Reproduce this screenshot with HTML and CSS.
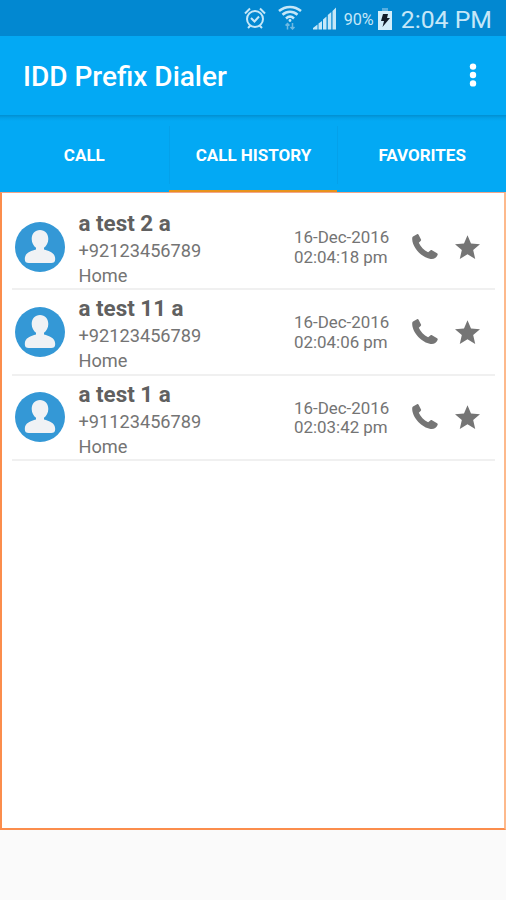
FILE: index.html
```html
<!DOCTYPE html>
<html lang="en">
<head>
    <meta charset="UTF-8">
    <meta name="viewport" content="width=device-width, initial-scale=1.0">
    <title>IDD Prefix Dialer</title>
    <link rel="stylesheet" href="styles.css">
</head>
<body>
    <!-- shared icons -->
    <svg class="sprite" width="0" height="0">
        <symbol id="avatar" viewBox="0 0 50 50">
            <circle cx="25" cy="25" r="25" fill="#3498d6"/>
            <path fill="#f0f2f5" d="M25 8c5 0 8.300 3.700 8.300 9 0 3.600-1.800 7-4.300 8.800v1.700c5 1.500 11.200 3 11.200 9.500 0 3-1.500 4-4 4H13.800c-2.500 0-4-1-4-4 0-6.500 6.200-8 11.200-9.500v-1.700c-2.500-1.800-4.300-5.200-4.300-8.800 0-5.300 3.300-9 8.300-9z"/>
        </symbol>
        <symbol id="phone" viewBox="0 0 26 26">
            <path fill="#757575" d="M1 2.600L5 .2c.6-.3 1.300-.1 1.600.5L9 5.400c.3.600.1 1.300-.4 1.700L6.800 8.800c1.700 4 5.100 7.300 9.300 9.500l2.300-1.900c.5-.4 1.100-.4 1.600-.1l5.100 3c.6.400.8 1 .5 1.600-1.300 3.200-3.900 4.400-7 4C10.200 23.800.6 14.200.2 5.300.1 4 .3 3.100 1 2.600z"/>
        </symbol>
        <symbol id="star" viewBox="2 2 20 19">
            <path fill="#757575" d="M12 17.270L18.180 21l-1.640-7.030L22 9.240l-7.190-.610L12 2 9.190 8.630 2 9.240l5.460 4.730L5.820 21z"/>
        </symbol>
    </svg>

    <div class="status-bar">
        <svg class="alarm" width="22" height="22" viewBox="0 0 22 22" fill="none" stroke="#c5e7f8" stroke-width="2">
            <circle cx="11" cy="12" r="8"/>
            <path d="M1 6.500L6 1.500M21 6.500L16 1.500M4 21l2.500-2.500M18 21l-2.500-2.500M7 11l3.500 3.500 4.500-5"/>
        </svg>
        <svg class="wifi" width="24" height="25" viewBox="0 0 24 25" fill="none" stroke="#c5e7f8" stroke-width="2.500">
            <path d="M1 6c6.500-5.500 15.500-5.500 22 0M4.500 9.800c4.500-4 10.500-4 15 0M8 13.500c2.500-2.300 5.500-2.300 8 0"/>
            <circle cx="12" cy="15.500" r="1.400" fill="#c5e7f8" stroke="none"/>
            <path stroke="#6fb9e2" stroke-width="1.500" d="M9.500 24.500v-6M7.500 20.500l2-2 2 2M14.500 18v6M12.500 22l2 2 2-2"/>
        </svg>
        <svg class="signal" width="24" height="23" viewBox="0 0 24 23" fill="#c5e7f8">
            <path d="M0 22.500v-1.500l4.500-3.500v5zM5.500 16.500l3.500-2.500v8.500H5.500zM10 12.500l3.500-3v13H10zM14.800 8L18.300 5v17.500h-3.500zM19.500 4L23 .5v22h-3.500z"/>
        </svg>
        <span class="percent">90%</span>
        <svg class="battery" width="14" height="22" viewBox="0 0 14 22">
            <path fill="#58aee0" d="M4 0h6v3H4z"/>
            <path fill="#d3eefb" d="M0 3h14v19H0z"/>
            <path fill="#111c2a" d="M5 6h5L9 10h3l-7.500 9 1.500-6H3z"/>
        </svg>
        <span class="clock">2:04 PM</span>
    </div>

    <header>
        <h1>IDD Prefix Dialer</h1>
        <svg class="menu" width="8" height="24" viewBox="0 0 8 24" fill="#fff">
            <circle cx="4" cy="3.600" r="3.200"/>
            <circle cx="4" cy="12" r="3.200"/>
            <circle cx="4" cy="20.400" r="3.200"/>
        </svg>
    </header>

    <nav>
        <a class="tab"><span>CALL</span></a>
        <a class="tab active"><span>CALL HISTORY</span></a>
        <a class="tab"><span>FAVORITES</span></a>
    </nav>

    <main>
        <div class="call">
            <svg class="avatar"><use href="#avatar"/></svg>
            <div class="contact">
                <div class="name">a test 2 a</div>
                <div class="number">+92123456789</div>
                <div class="type">Home</div>
            </div>
            <div class="time">16-Dec-2016<br>02:04:18 pm</div>
            <svg class="phone"><use href="#phone"/></svg>
            <svg class="star"><use href="#star"/></svg>
        </div>
        <div class="call">
            <svg class="avatar"><use href="#avatar"/></svg>
            <div class="contact">
                <div class="name">a test 11 a</div>
                <div class="number">+92123456789</div>
                <div class="type">Home</div>
            </div>
            <div class="time">16-Dec-2016<br>02:04:06 pm</div>
            <svg class="phone"><use href="#phone"/></svg>
            <svg class="star"><use href="#star"/></svg>
        </div>
        <div class="call">
            <svg class="avatar"><use href="#avatar"/></svg>
            <div class="contact">
                <div class="name">a test 1 a</div>
                <div class="number">+91123456789</div>
                <div class="type">Home</div>
            </div>
            <div class="time">16-Dec-2016<br>02:03:42 pm</div>
            <svg class="phone"><use href="#phone"/></svg>
            <svg class="star"><use href="#star"/></svg>
        </div>
    </main>
</body>
</html>
```

FILE: styles.css
```css
* {
    box-sizing: border-box;
}

body {
    font-family: Roboto, sans-serif;
    margin: 0;
    height: 900px;
    background-color: #fafafa;
    overflow: hidden;
}

svg {
    display: block;
    flex-shrink: 0;
}

.sprite {
    display: none;
}

.status-bar {
    display: flex;
    justify-content: flex-end;
    align-items: center;
    height: 36px;
    padding: 1px 14px 0 0;
    background-color: #0288d1;
    color: #c5e7f8;
}

.alarm {
    margin-bottom: 2px;
}

.wifi {
    margin: 0 0 3px 12px;
}

.signal {
    margin-left: 11px;
}

.percent {
    margin-left: 7px;
    padding-top: 1px;
    font-size: 16.200px;
}

.battery {
    margin: 0 9px 0 4px;
}

.clock {
    padding-top: 1px;
    font-size: 24.800px;
}

header {
    display: flex;
    justify-content: space-between;
    align-items: center;
    height: 79px;
    padding: 2px 29px 0 23px;
    background-color: #03a9f4;
    color: white;
}

h1 {
    margin: 0;
    font-size: 28px;
    font-weight: 500;
    white-space: nowrap;
}

.menu {
    margin-bottom: 3px;
}

nav {
    display: grid;
    grid-template-columns: repeat(3, 1fr);
    height: 77px;
    background: linear-gradient(#028fd1, #03a1e9 3px, #03a9f4 6px);
}

.tab {
    display: flex;
    align-items: center;
    padding: 11px 0 6px;
    border-bottom: 2px solid transparent;
    color: white;
    font-size: 17px;
    font-weight: bold;
}

.tab span {
    flex: 1;
    line-height: 58px;
    text-align: center;
}

.tab + .tab span {
    border-left: 1px solid #04a1ea;
}

.active {
    border-bottom-color: #e8921c;
}

main {
    height: 638px;
    padding: 12px 9px 0 10px;
    border: 2px solid #fb8d4c;
    border-top: 1px solid #f2a58a;
    border-right-color: #fdb98c;
    background-color: white;
}

.call {
    display: flex;
    align-items: center;
    height: 85.300px;
    padding: 0 15px 0 3px;
    border-bottom: 2px solid #f0f0f0;
    color: #747474;
}

.avatar {
    width: 50px;
    height: 50px;
}

.contact {
    flex: 1;
    margin-left: 13.500px;
    padding-top: 2px;
    font-size: 18.200px;
    line-height: 25px;
}

.name {
    height: 31px;
    color: #606060;
    font-size: 22.400px;
    font-weight: bold;
    line-height: 33px;
}

.time {
    width: 95px;
    padding-top: 2px;
    font-size: 16.900px;
    line-height: 19.500px;
    white-space: nowrap;
}

.phone {
    width: 26px;
    height: 26px;
    margin-left: 23px;
}

.star {
    width: 25px;
    height: 24px;
    margin-left: 17px;
}
```
